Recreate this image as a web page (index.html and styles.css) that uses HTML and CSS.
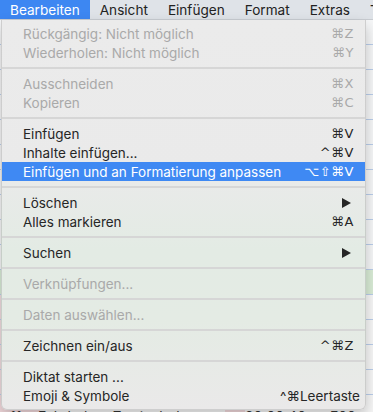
FILE: index.html
```html
<!DOCTYPE html>
<html lang="de">
<head>
  <meta charset="UTF-8" />
  <title>Bearbeiten</title>
  <link rel="stylesheet" href="styles.css">
</head>
<body>
  <div class="menubar">
    <span class="open">Bearbeiten</span>
    <span>Ansicht</span>
    <span>Einfügen</span>
    <span>Format</span>
    <span>Extras</span>
    <span>Tabelle</span>
  </div>

  <div class="screen">
    <!-- document behind the menu -->
    <div class="sheet">
      <div class="line"></div>
      <div class="line"></div>
      <div class="line"></div>
      <div class="line"></div>
      <div class="line"></div>
      <div class="line"></div>
      <div class="line"></div>
      <div class="line"></div>
      <div class="line"></div>
      <div class="line"></div>
      <div class="line green"></div>
      <div class="line pink"></div>
      <div class="line pink"></div>
      <div class="line pink"></div>
      <div class="line pink"></div>
      <div class="line last">
        <span class="c1">11</span>
        <span class="c2">Fahrhelere Zutrittsbohrung</span>
        <span class="c3">20:00:40</span>
        <span class="c4">F00</span>
      </div>
    </div>

    <!-- dropdown -->
    <div class="menu">
      <div class="item off"><span>Rückgängig: Nicht möglich</span><span class="key">⌘Z</span></div>
      <div class="item off"><span>Wiederholen: Nicht möglich</span><span class="key">⌘Y</span></div>
      <div class="sep"></div>
      <div class="item off"><span>Ausschneiden</span><span class="key">⌘X</span></div>
      <div class="item off"><span>Kopieren</span><span class="key">⌘C</span></div>
      <div class="sep"></div>
      <div class="item"><span>Einfügen</span><span class="key">⌘V</span></div>
      <div class="item"><span>Inhalte einfügen...</span><span class="key">^⌘V</span></div>
      <div class="item selected"><span>Einfügen und an Formatierung anpassen</span><span class="key">⌥⇧⌘V</span></div>
      <div class="sep"></div>
      <div class="item"><span>Löschen</span><svg class="arrow" width="9" height="10" viewBox="0 0 9 10"><path d="M0 0 L9 5 L0 10 Z" fill="#262626"/></svg></div>
      <div class="item"><span>Alles markieren</span><span class="key">⌘A</span></div>
      <div class="sep"></div>
      <div class="item"><span>Suchen</span><svg class="arrow" width="9" height="10" viewBox="0 0 9 10"><path d="M0 0 L9 5 L0 10 Z" fill="#262626"/></svg></div>
      <div class="sep"></div>
      <div class="item off"><span>Verknüpfungen...</span></div>
      <div class="sep"></div>
      <div class="item off"><span>Daten auswählen...</span></div>
      <div class="sep"></div>
      <div class="item"><span>Zeichnen ein/aus</span><span class="key">^⌘Z</span></div>
      <div class="sep"></div>
      <div class="item"><span>Diktat starten ...</span></div>
      <div class="item"><span>Emoji &amp; Symbole</span><span class="key wide">^⌘Leertaste</span></div>
    </div>
  </div>
</body>
</html>
```

FILE: styles.css
```css
body {
  margin: 0;
  width: 373px;
  height: 412px;
  overflow: hidden;
  font-family: "Inter", "DejaVu Sans", sans-serif;
  font-size: 13.5px;
  color: #262626;
  background: #f6f7f8;
}

/* top menu bar */
.menubar {
  height: 20px;
  display: flex;
  align-items: center;
  background: #dfe3e8;
  border-bottom: 1px solid #c9cdd2;
  box-sizing: border-box;
  white-space: nowrap;
  overflow: hidden;
  font-size: 13.6px;
}

.menubar span {
  height: 100%;
  line-height: 20px;
  padding: 0 10px;
  color: #222;
}

.menubar .open {
  background: #3d87f2;
  color: #fff;
}

.screen {
  position: relative;
  height: 392px;
}

/* spreadsheet that shows at the edges */
.line {
  height: 25px;
  border-bottom: 1px solid #b9cdea;
  box-sizing: border-box;
  display: flex;
  align-items: flex-start;
  font-size: 14px;
  color: #333;
}

.line.green {
  background: #d9ecd6;
}

.line.pink {
  background: linear-gradient(to right, #f1dcdf 0 40px, #f7f7f7 40px);
}

.line.last {
  padding-top: 13px;
  border-bottom: none;
  background: linear-gradient(to right, #f2d9dc 0 40px, #f7f7f7 40px 225px, #f2d9dc 225px 245px, #f7f7f7 245px);
}

.c1 { width: 38px; padding-left: 10px; box-sizing: border-box; }
.c2 { width: 207px; }
.c3 { width: 85px; }

/* dropdown */
.menu {
  position: absolute;
  top: 0;
  left: 1px;
  width: 365px;
  padding: 4px 0;
  box-sizing: border-box;
  background: linear-gradient(to bottom, #ebebeb 0, #eaeaea 150px, #e3ebe4 230px, #e4ebe4 300px, #eae9e9 389px);
  border: 1px solid rgba(0, 0, 0, 0.12);
  border-top: none;
  border-radius: 0 0 6px 6px;
  box-shadow: 0 6px 14px rgba(0, 0, 0, 0.22);
}

.item {
  height: 19px;
  display: flex;
  align-items: center;
  justify-content: space-between;
  padding: 0 11px 0 21px;
  white-space: nowrap;
}

.item.off {
  color: #a9a9a9;
}

.item.selected {
  background: #3f89f3;
  color: #fff;
}

.key {
  font-family: "DejaVu Sans", sans-serif;
  font-size: 13px;
  letter-spacing: 0.5px;
}

.key.wide {
  font-family: "Inter", "DejaVu Sans", sans-serif;
  font-size: 13.5px;
  letter-spacing: 0;
  margin-right: -6px;
}

.arrow {
  margin-right: 3px;
}

.sep {
  height: 2px;
  margin: 5px 0;
  background: #d6d6d6;
}
```
